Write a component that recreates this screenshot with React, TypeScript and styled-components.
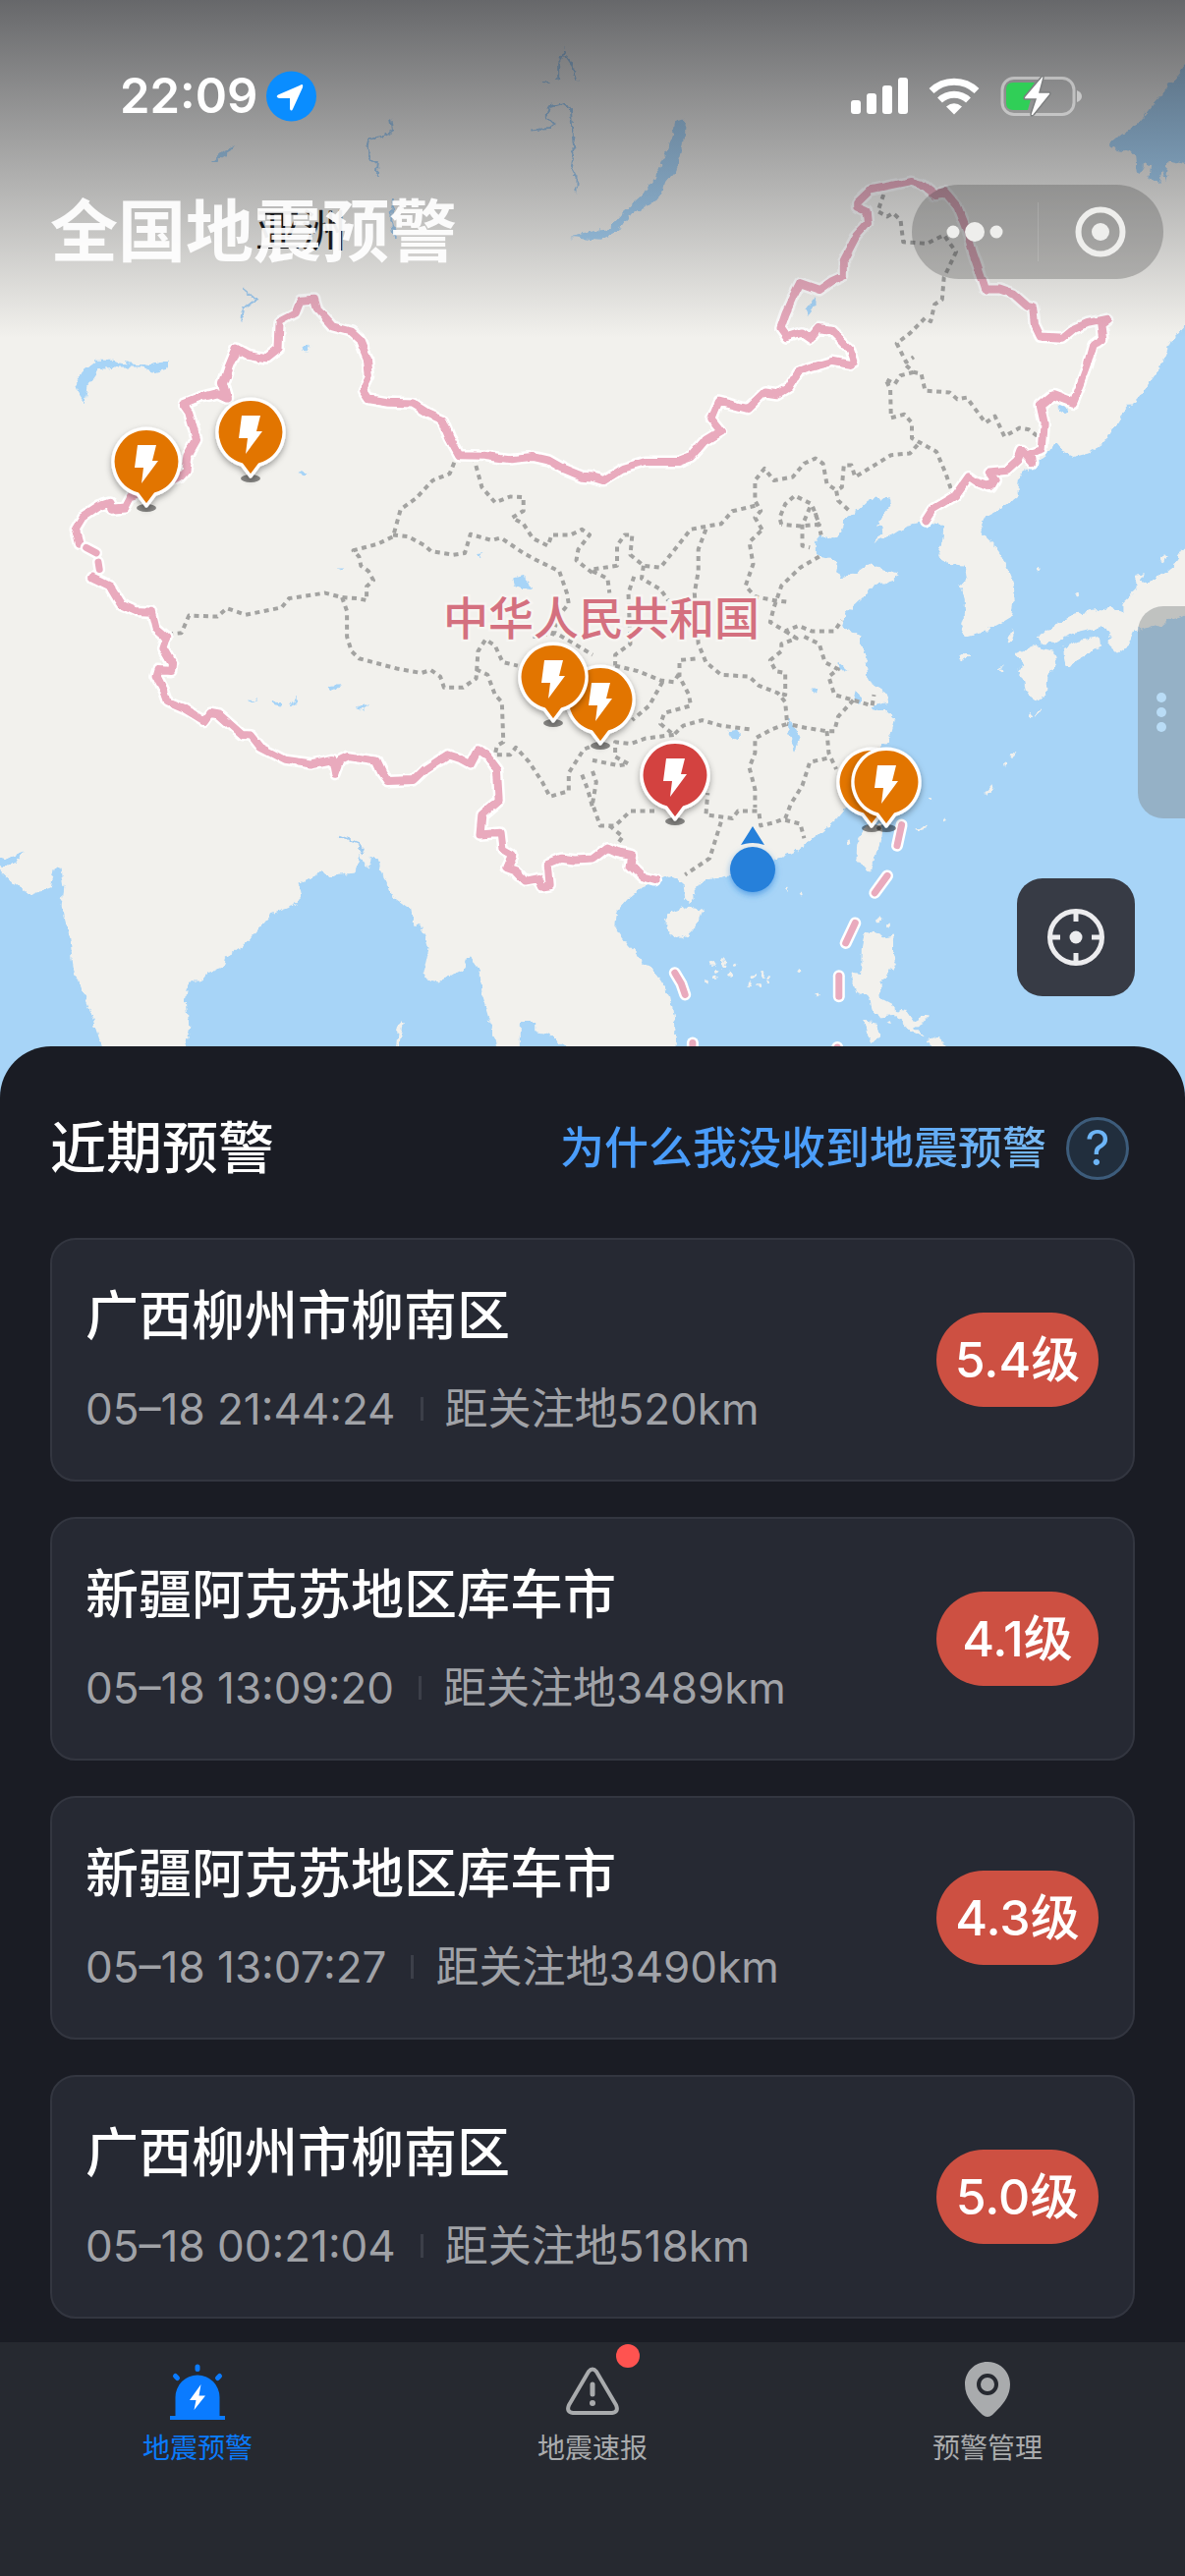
import React from "react";
import styled, { createGlobalStyle } from "styled-components";

const GlobalStyle = createGlobalStyle`
  *, *::before, *::after { box-sizing: border-box; }
  body {
    margin: 0;
    background: #1a1c24;
    color: #fff;
    font-family: Inter, "Noto Sans CJK SC", sans-serif;
  }
  h1, h2, h3, p, ul { margin: 0; padding: 0; }
  ul { list-style: none; }
  button { border: 0; padding: 0; background: none; color: inherit; font: inherit; cursor: pointer; }
  a { color: inherit; text-decoration: none; }
  svg { display: block; }
`;

type Sheet = "a" | "b" | "c" | "d";
type Piece = [Sheet, string];

const sheets: Record<Sheet, { x: number; y: number; kx: number; ky: number }> = {
  a: { x: 0, y: 0, kx: 2.6, ky: 2.904 },
  b: { x: 603, y: 0, kx: 2.6, ky: 2.904 },
  c: { x: 0, y: 500, kx: 2.6, ky: 2.703 },
  d: { x: 603, y: 500, kx: 2.6, ky: 2.703 },
};

const plot = (pieces: Piece[]) =>
  pieces
    .flatMap(([name, text]) => {
      const s = sheets[name];
      return text.split(" ").map((pair) => {
        const [px, py] = pair.split(",").map(Number);
        return `${(s.x + px / s.kx).toFixed(1)},${(s.y + py / s.ky).toFixed(1)}`;
      });
    })
    .join(" ");

const seas: Piece[][] = [
  [
    ["d", "215,1650 222,1480 205,1385 170,1330 130,1290 90,1245 60,1200 65,1155 95,1120 130,1090 170,1075 205,1060 240,1075 245,1120 258,1133 272,1120 268,1085 300,1070 360,1058 440,1020 500,1008 545,985 590,950 640,905 665,875 700,850 740,760 765,700 790,670 800,630 770,600 735,598 745,590 785,580 775,555 730,525 725,470 708,400 660,370 672,335 710,300 735,265 800,245 808,225 770,215 730,200 690,230 665,238 645,225 650,190 620,185 590,170 590,140 605,120 630,130 655,115 665,80 700,55 725,30 750,15 785,20 790,40 760,75 755,100 770,105 745,140 790,120 830,95 870,85 930,95 925,140 910,180 945,200 985,205 990,240 975,260 985,300 985,350 975,385 985,400 1040,385 1085,360 1110,345 1115,310 1112,250 1085,180 1060,145 1025,110 1035,75 1080,50 1125,15"],
    ["b", "1125,1440 1130,1405 1170,1370 1200,1345 1215,1320 1225,1310 1240,1330 1275,1350 1310,1340 1360,1300 1395,1235 1450,1170 1500,1090 1530,1010 1568,965 1620,930"],
    ["d", "1620,1680 215,1680"],
  ],
  [["c", "485,1680 490,1540 500,1470 492,1390 500,1350 530,1350 550,1325 590,1310 595,1285 660,1235 715,1165 780,1140 798,1110 792,1080 840,1055 850,1040 870,1060 940,1050 950,1000 975,1040 980,1005 1000,1010 1015,1060 1035,1110 1090,1150 1095,1190 1115,1195 1135,1260 1118,1340 1160,1350 1200,1325 1230,1310 1240,1275 1270,1320 1275,1380 1295,1450 1315,1530 1325,1680"]],
  [["c", "1375,1600 1375,1460 1415,1460 1415,1490 1450,1495 1495,1527 1550,1600"]],
  [["c", "-20,1020 40,1080 80,1112 135,1090 145,1035 163,1040 170,1090 163,1140 185,1230 195,1320 240,1430 270,1527 290,1680 -20,1680"]],
  [["c", "-10,1000 20,1010 65,993 50,1015 10,1030 -10,1025"]],
  [["b", "1600,165 1568,195 1500,290 1440,370 1400,395 1370,425 1385,445 1435,450 1440,510 1450,515 1460,480 1480,490 1475,530 1500,540 1510,500 1518,535 1525,475 1568,485 1600,480"]],
  [["b", "-20,690 40,680 80,630 130,580 165,530 180,490 210,410 220,355 245,350 240,420 222,500 190,540 180,580 140,610 100,635 70,685 20,708 -60,700"]],
  [["a", "200,1130 215,1100 255,1065 300,1065 340,1075 400,1080 450,1068 440,1088 410,1098 370,1085 300,1085 260,1090 235,1130 225,1190 205,1155"]],
  [["b", "565,915 590,878 592,900 572,932"]],
  [["c", "1357,240 1380,233 1400,250 1408,270 1385,268 1362,258"]],
  [["b", "1228,1208 1240,1196 1256,1210 1242,1220"]],
  [["a", "800,1025 822,1020 815,1038 800,1035"]],
  [["a", "785,1400 795,1388 815,1402 800,1404"]],
  [["c", "942,595 978,587 960,602 944,605"]],
  [["c", "868,535 900,533 890,548 875,545"]],
  [["c", "722,580 748,582 738,592 724,590"]],
  [["c", "770,592 788,562 785,580 775,594"]],
  [["c", "660,572 680,574 668,579"]],
  [["c", "888,212 912,212 902,218"]],
  [["c", "1258,170 1278,168 1268,178"]],
  [["d", "575,545 597,545 590,558 577,552"]],
  [["d", "692,575 700,555 712,565 708,585 695,583"]],
  [["d", "512,625 530,640 550,680 532,718 526,680 516,650"]],
  [["d", "360,660 385,655 388,680 375,688"]],
  [["d", "650,470 672,490 660,495"]],
  [["a", "555,480 585,450 625,430 610,448 575,472"]],
];

const islands: Piece[][] = [
  [["d", "1620,100 1560,160 1530,210 1500,235 1465,255 1450,248 1458,225 1440,228 1435,260 1440,270 1405,305 1405,330 1370,322 1320,330 1275,340 1240,360 1200,385 1180,400 1185,420 1225,418 1260,395 1300,385 1330,378 1360,375 1375,400 1365,420 1390,445 1420,420 1435,385 1480,370 1500,375 1530,350 1568,340 1620,350"]],
  [["d", "1245,430 1290,410 1340,400 1345,425 1310,445 1290,455 1265,485 1250,470"]],
  [["d", "1115,450 1165,425 1220,440 1225,475 1205,510 1200,560 1175,580 1150,560 1140,520 1125,490 1145,480"]],
  [["d", "700,975 725,920 768,915 760,970 745,1010 730,1048 698,1008"]],
  [["d", "190,1180 205,1160 245,1145 293,1150 280,1185 260,1215 232,1232 195,1210"]],
  [["d", "720,1215 745,1212 770,1225 800,1220 795,1260 803,1290 785,1330 760,1350 765,1400 800,1420 800,1440 760,1445 740,1430 735,1395 700,1380 685,1325 710,1330 712,1260"]],
  [["d", "712,1455 755,1465 760,1500 740,1518"]],
  [["d", "780,1420 830,1430 850,1460 885,1440 885,1455 850,1475 880,1505 850,1490 820,1460"]],
  [["d", "885,1508 915,1500 945,1535 900,1535"]],
  [["d", "966,460 985,443 1003,450 985,464"]],
  [["d", "1505,195 1510,170 1520,180 1512,198"]],
  [["d", "1033,835 1058,805 1062,812 1040,838"]],
  [["d", "1105,728 1125,715 1112,738"]],
  [["d", "1172,618 1184,592 1186,602 1178,620"]],
  [["d", "1155,618 1162,610 1168,618 1160,624"]],
  [["d", "1100,410 1110,380 1114,395 1106,416"]],
  [["d", "856,932 885,918 886,928 862,936"]],
  [["d", "926,905 934,898 938,908 930,912"]],
  [["d", "890,848 898,843 900,852"]],
  [["d", "545,1108 552,1100 560,1110 552,1118"]],
  [["d", "672,960 680,955 682,972 674,970"]],
  [["d", "588,1378 596,1374 600,1384 592,1388"]],
  [["d", "776,1465 784,1460 788,1468"]],
  [["d", "512,1092 518,1088 520,1100"]],
  [["c", "1048,1527 1052,1490 1060,1460 1068,1465 1060,1500 1056,1530"]],
];

const reefs = ["318,1300", "330,1322", "345,1290", "350,1305", "362,1332", "375,1302", "322,1335", "350,1298", "415,1355", "425,1335", "440,1362", "452,1330", "466,1335", "462,1350", "304,1350", "547,1322", "760,1180", "780,1195", "1282,288", "1176,217", "1092,750", "1082,490"];

const landBorder: Piece[][] = [
  [
    ["b", "880,1540 900,1505 960,1465 995,1410 1015,1425 1055,1440 1065,1420 1050,1395 1095,1390 1125,1360 1135,1330 1165,1368 1160,1340 1190,1330 1195,1250 1185,1200 1220,1168 1272,1190 1290,1140 1310,1080 1325,1020 1350,1000 1345,960 1365,943 1310,955 1270,975 1245,998 1185,995 1170,960 1165,910 1150,905 1115,870 1075,855 1040,855 1028,815 1005,740 990,680 965,610 935,570 905,575 870,545 845,537 800,547 735,562 700,600 700,612 725,625 728,660 700,695 665,770 665,815 635,830 600,857 550,837 530,880 510,930 498,970 515,997 555,983 578,1000 600,970 630,975 680,1030 692,1070 680,1077 635,1068 580,1085 545,1100 520,1145 490,1165 455,1160 410,1208 365,1195 335,1187 315,1240 340,1275 295,1305 260,1350 225,1365 140,1365 80,1385 30,1420 0,1410"],
    ["a", "1540,1408 1490,1385 1450,1360 1410,1350 1350,1357 1280,1347 1215,1345 1190,1295 1170,1240 1130,1220 1090,1192 1030,1190 975,1180 960,1155 977,1115 972,1060 950,1000 930,980 880,965 840,915 832,885 795,888 782,925 740,950 737,1030 705,1058 655,1048 625,1030 605,1085 590,1135 600,1175 575,1162 530,1175 485,1195 500,1220 520,1300 495,1350 490,1390 475,1410 420,1440"],
    ["c", "345,15 330,45 295,48 290,32 260,42 220,70 200,105 210,145"],
  ],
  [
    ["c", "245,237 290,260 310,295 320,312 360,330 402,332 412,375 440,400 430,430 455,475 453,495 420,492 415,510 435,550 445,580 490,600 540,632 555,610 580,615 640,670 665,672 690,705 755,740 825,750 880,738 887,778 900,740 920,730 995,742 1010,775 1025,797 1095,795 1125,765 1185,725 1215,735 1245,752 1265,712 1290,730 1315,765 1320,850 1275,890 1270,945 1325,940 1330,985 1355,1000 1340,1035 1365,1045 1390,1072 1425,1065 1435,1088 1455,1085 1450,1025 1485,1010 1520,1015"],
    ["d", "0,1012 40,980 65,992 105,1000 100,1030 130,1060 165,1070"],
  ],
];

const dashBorder: Piece[][] = [
  [["c", "228,155 255,170"]],
  [["c", "260,195 263,215"]],
  [["d", "818,918 806,975"]],
  [["d", "780,1058 747,1105"]],
  [["d", "695,1188 670,1243"]],
  [["d", "652,1333 652,1390"]],
  [["d", "218,1325 235,1355 245,1385"]],
  [["d", "265,1518 265,1580"]],
  [["d", "648,1530 648,1580"]],
];

const provinces: Piece[][] = [
  [["c", "445,393 480,390 500,342 575,345 600,322 650,340 745,320 765,295 860,280 905,292 945,295 970,300 970,262 988,245 975,220 955,205 950,180 935,163 1000,145 1040,125 1060,50 1100,20"], ["a", "1145,1420 1190,1400 1210,1345"]],
  [["c", "1040,120 1080,125 1125,150 1140,165 1200,175 1230,170 1245,118 1300,135 1325,128 1385,170 1420,190 1480,220 1500,280 1505,310 1480,340 1460,400"]],
  [["c", "905,292 918,330 918,400 930,440 950,460 1050,488 1115,500 1140,492 1165,510 1175,540 1225,540 1260,515 1265,440 1285,408 1310,425 1330,470 1370,480"]],
  [["c", "1260,490 1290,505 1310,560 1328,580 1332,690 1315,700 1310,725 1350,725 1365,705 1400,745 1435,800 1455,840 1505,825 1505,775 1545,710 1568,700"]],
  [["a", "1253,1350 1275,1440 1310,1485 1350,1468 1385,1470 1385,1510 1355,1530"], ["c", "1385,90 1410,130 1450,150 1460,120 1510,120 1540,105 1560,120 1530,160 1525,190 1568,225"]],
  [["b", "770,575 755,625 780,640 795,630 815,650 822,715 885,720 930,695 962,745 930,820 925,885 905,900 895,950 880,940 840,985 805,1015 830,1070 850,1055"]],
  [["b", "830,1080 850,1100 870,1105 880,1155 945,1160 965,1180 990,1175 1040,1250 1065,1230 1090,1290 1130,1265 1155,1270 1190,1300"]],
  [["b", "850,1100 815,1110 800,1135 775,1120 788,1150 790,1235 825,1225 845,1250 845,1295 910,1335 935,1400 950,1450"]],
  [["b", "860,1315 840,1340 790,1345 695,1410 685,1375 665,1375 660,1440 645,1450 650,1480 685,1515"]],
  [["b", "640,1445 620,1430 610,1370 590,1355 560,1370 530,1410 480,1420 455,1385 430,1420 430,1480 445,1510 430,1530 450,1568"], ["d", "450,105 415,140 425,200 405,260 430,290 480,300 520,305"]],
  [["b", "500,1550 495,1530 510,1490 535,1465 580,1490 600,1550 550,1555 500,1550"]],
  [["b", "575,1500 560,1540"], ["d", "555,90 555,150 575,155"]],
  [["d", "590,60 605,120"]],
  [["d", "430,40 370,55 340,90 310,95 260,105 210,170 180,210 135,205 100,175 105,120 85,120 65,150 65,205 0,215"]],
  [["d", "300,105 280,160 280,220 270,280 280,420 300,470 340,505 415,510 440,535 490,555 510,580 515,640 475,655 430,680 430,720 415,760 430,820 430,870"]],
  [["d", "600,180 550,210 500,260 480,320 470,360 510,385 545,370 580,385 640,385 660,355"]],
  [["d", "510,385 540,405 500,420 500,440 470,465 485,495 510,500 510,560 490,555"]],
  [["d", "560,400 600,420 615,470 650,490 625,510 640,560 690,575 740,590 745,560"]],
  [["d", "690,575 650,620 640,660 620,660 560,650 515,640"]],
  [["d", "620,660 625,720 645,765"]],
  [["d", "620,735 575,745 555,810 525,860 510,900 480,912 445,920 440,880 385,880 370,900 300,890 305,830"]],
  [["d", "510,905 550,915 560,955"]],
  [["d", "340,910 325,960 310,1010 245,1055"]],
  [["d", "415,655 340,645 290,630 240,645 215,670 180,640 190,610 260,590 255,560 230,510 230,465 280,460"]],
  [["d", "60,480 120,495 180,520 215,525 230,500"]],
  [["d", "185,525 150,590 105,630"]],
  [["d", "215,670 140,680 100,695 60,690 60,730 95,750 70,755 0,740"]],
  [["d", "0,770 10,800 0,860 20,920 60,920 100,880 170,880"]],
  [["d", "45,920 80,950 60,980"]],
  [["d", "0,220 40,240 45,280"]],
  [["d", "135,205 130,240 180,270 200,300"]],
  [["d", "110,235 95,280 100,420 60,450 60,480"]],
  [["c", "1410,400 1470,390 1520,420 1568,450"]],
  [["c", "1540,780 1555,820 1568,870"]],
];

const rivers: Piece[][] = [
  [["a", "1035,350 1040,385 1015,402 975,412 972,440 985,470 998,480 995,522"]],
  [["a", "1495,145 1480,190 1480,240"]],
  [["a", "1495,165 1520,205 1530,238"]],
  [["a", "1470,370 1445,340 1450,318 1490,305 1510,320 1515,400 1520,440 1510,490 1525,520 1525,570"]],
  [["a", "1405,385 1450,380 1475,370"]],
  [["a", "1435,240 1455,248"]],
  [["a", "640,855 678,888 645,910 640,948"]],
  [["a", "1040,590 1035,650 1045,700"]],
  [["c", "892,948 950,970 960,1000"]],
];

type Quake = { x: number; y: number; color: string };

const quakes: Quake[] = [
  { x: 149, y: 470, color: "#e27500" },
  { x: 255, y: 440, color: "#e27500" },
  { x: 611, y: 712, color: "#e27500" },
  { x: 563, y: 689, color: "#e27500" },
  { x: 687, y: 789, color: "#d3423f" },
  { x: 887, y: 796, color: "#e27500" },
  { x: 902, y: 796, color: "#e27500" },
];

const QuakePin = ({ x, y, color }: Quake) => (
  <g transform={`translate(${x} ${y})`}>
    <ellipse cx="0" cy="47" rx="10" ry="4" fill="#000" opacity=".45" />
    <path
      d="M0 45 L-9 33 A34 34 0 1 1 9 33 Z"
      fill={color}
      stroke="#fff"
      strokeWidth="3.5"
      strokeLinejoin="round"
      filter="url(#pin-shadow)"
    />
    <path d="M-9 -17 H10 L6 -1 H12 L-5 22 L-3 6 H-12 Z" fill="#fff" />
  </g>
);

const Lines = ({ items }: { items: Piece[][] }) => (
  <>
    {items.map((s, i) => <polyline key={i} points={plot(s)} />)}
  </>
);

const ChinaMap = () => (
  <MapDrawing viewBox="0 0 1206 1120" preserveAspectRatio="xMidYMin slice" role="img" aria-label="地震预警地图">
    <defs>
      <filter id="rough" x="-5%" y="-5%" width="110%" height="110%">
        <feTurbulence type="fractalNoise" baseFrequency=".12" numOctaves="3" seed="4" result="noise" />
        <feDisplacementMap in="SourceGraphic" in2="noise" scale="8" xChannelSelector="R" yChannelSelector="G" />
      </filter>
      <filter id="wobble" x="-5%" y="-5%" width="110%" height="110%">
        <feTurbulence type="fractalNoise" baseFrequency=".07" numOctaves="1" seed="9" result="noise" />
        <feDisplacementMap in="SourceGraphic" in2="noise" scale="7" xChannelSelector="R" yChannelSelector="G" />
      </filter>
      <filter id="pin-shadow" x="-30%" y="-30%" width="160%" height="160%">
        <feDropShadow dx="0" dy="3" stdDeviation="3" floodOpacity=".35" />
      </filter>
      <filter id="blue-shadow" x="-40%" y="-40%" width="180%" height="180%">
        <feDropShadow dx="0" dy="3" stdDeviation="3" floodColor="#2580da" floodOpacity=".6" />
      </filter>
    </defs>
    <rect width="1206" height="1120" fill="#f2f1ed" />
    <g filter="url(#rough)">
      <g fill="#a7d4f7">
        {seas.map((s, i) => <polygon key={i} points={plot(s)} />)}
      </g>
      <g fill="#f2f1ed">
        {islands.map((s, i) => <polygon key={i} points={plot(s)} />)}
        {reefs.map((p) => {
          const [cx, cy] = plot([["d", p]]).split(",");
          return <circle key={p} cx={cx} cy={cy} r="2" />;
        })}
      </g>
    </g>
    <g filter="url(#rough)" fill="none" stroke="#9fcbf0" strokeWidth="2">
      <Lines items={rivers} />
    </g>
    <g fill="none" stroke="#a3a3a1" strokeWidth="4" strokeDasharray="5 4.5" strokeLinejoin="round">
      <Lines items={provinces} />
    </g>
    <g fill="none" strokeLinecap="round" strokeLinejoin="round">
      <g filter="url(#wobble)">
        <g stroke="#fff" strokeWidth="13">
          <Lines items={landBorder} />
        </g>
        <g stroke="#e9aabd" strokeWidth="8">
          <Lines items={landBorder} />
        </g>
      </g>
      <g stroke="#fff" strokeWidth="12">
        <Lines items={dashBorder} />
      </g>
      <g stroke="#e9aabd" strokeWidth="7">
        <Lines items={dashBorder} />
      </g>
    </g>
    <text x="612" y="646" textAnchor="middle" fontSize="46" fontWeight="500" fill="#d4707f" stroke="#f7f5f2" strokeWidth="5" paintOrder="stroke">
      中华人民共和国
    </text>
    {quakes.map((q, i) => <QuakePin key={i} {...q} />)}
    <g fill="#2580da">
      <path d="M766 841 L778 860 Q766 856 754 860 Z" />
      <circle cx="766" cy="885" r="23" filter="url(#blue-shadow)" />
    </g>
  </MapDrawing>
);

/* ---------- layout parts ---------- */

const Page = styled.div`
  display: flex;
  flex-direction: column;
  min-height: 100vh;
`;

const MapArea = styled.section`
  position: relative;
  height: 1120px;
  overflow: hidden;
`;

const MapDrawing = styled.svg`
  width: 100%;
  height: 100%;
`;

const TopOverlay = styled.header`
  position: absolute;
  inset: 0 0 auto;
  height: 344px;
  padding: 66px 22px 0 51px;
  background: linear-gradient(rgba(28, 30, 36, 0.65), rgba(28, 30, 36, 0));
`;

const StatusBar = styled.div`
  display: flex;
  align-items: center;
  justify-content: space-between;
  height: 64px;
  padding: 0 82px 0 71px;
`;

const StatusGroup = styled.div<{ $gap: number }>`
  display: flex;
  align-items: center;
  gap: ${(p) => p.$gap}px;
`;

const Clock = styled.time`
  font-size: 49px;
  line-height: 64px;
  font-weight: 600;
`;

const TitleBar = styled.div`
  display: flex;
  align-items: center;
  justify-content: space-between;
  height: 96px;
  margin-top: 58px;
`;

const PageTitle = styled.h1`
  position: relative;
  font-size: 69px;
  line-height: 96px;
  font-weight: 700;
  color: rgba(255, 255, 255, 0.93);
`;

const ContinentLabel = styled.span`
  position: absolute;
  left: 260px;
  top: 202px;
  font-size: 46px;
  line-height: 64px;
  color: #17181a;
`;

const Capsule = styled.div`
  display: flex;
  width: 256px;
  height: 96px;
  border-radius: 48px;
  background: rgba(60, 60, 60, 0.28);
`;

const CapsuleButton = styled.button`
  display: flex;
  flex: 1;
  align-items: center;
  justify-content: center;
`;

const CapsuleRule = styled.span`
  width: 1px;
  height: 60px;
  margin-top: 18px;
  background: rgba(255, 255, 255, 0.15);
`;

const SideHandle = styled.button`
  position: absolute;
  right: 0;
  top: 617px;
  display: flex;
  flex-direction: column;
  align-items: center;
  justify-content: center;
  gap: 5px;
  width: 48px;
  height: 216px;
  border-radius: 26px 0 0 26px;
  background: rgba(124, 128, 132, 0.42);
`;

const HandleDot = styled.span`
  width: 10px;
  height: 10px;
  border-radius: 50%;
  background: #b9dcf6;
`;

const LocateButton = styled.button`
  position: absolute;
  right: 51px;
  top: 894px;
  display: flex;
  align-items: center;
  justify-content: center;
  width: 120px;
  height: 120px;
  border-radius: 26px;
  background: #373b45;
`;

const Panel = styled.main`
  position: relative;
  flex: 1;
  margin-top: -55px;
  padding: 72px 51px 24px;
  border-radius: 52px 52px 0 0;
  background: #1a1c24;
`;

const PanelHead = styled.div`
  display: flex;
  align-items: center;
  justify-content: space-between;
  height: 64px;
  margin-bottom: 59px;
  padding-right: 6px;
`;

const PanelTitle = styled.h2`
  font-size: 57px;
  line-height: 64px;
  font-weight: 500;
`;

const HelpLink = styled.a`
  display: flex;
  align-items: center;
  gap: 20px;
`;

const HelpText = styled.span`
  font-size: 45px;
  line-height: 64px;
  font-weight: 500;
  color: transparent;
  background: linear-gradient(90deg, #4a9dfb 50%, #78b9f2);
  background-clip: text;
`;

const HelpMark = styled.span`
  display: flex;
  align-items: center;
  justify-content: center;
  width: 64px;
  height: 64px;
  border: 3px solid #3d5c7b;
  border-radius: 50%;
  background: #212e3d;
  color: #6db5f7;
  font-size: 49px;
  line-height: 56px;
  font-weight: 400;
`;

const AlertList = styled.ul`
  display: flex;
  flex-direction: column;
  gap: 36px;
`;

const AlertCard = styled.li`
  display: flex;
  align-items: center;
  justify-content: space-between;
  padding: 44px 35px 44px 34px;
  border: 2px solid #333640;
  border-radius: 26px;
  background: #262933;
`;

const AlertInfo = styled.div`
  display: flex;
  flex-direction: column;
  gap: 34px;
  padding-top: 2px;
`;

const Place = styled.h3`
  font-size: 54px;
  line-height: 64px;
  font-weight: 500;
`;

const Meta = styled.p`
  display: flex;
  align-items: center;
  font-size: 44px;
  line-height: 56px;
  color: #a0a2a7;
`;

const MetaRule = styled.span`
  width: 3px;
  height: 24px;
  margin: 0 22px 0 25px;
  background: #3c3f49;
`;

const Magnitude = styled.strong`
  display: flex;
  align-items: center;
  justify-content: center;
  min-width: 165px;
  height: 96px;
  border-radius: 48px;
  background: #cd5042;
  font-size: 50px;
  line-height: 64px;
  font-weight: 500;
`;

const TabBar = styled.nav`
  display: flex;
  height: 238px;
  padding-top: 16px;
  background: #262930;
`;

const Tab = styled.a<{ $active?: boolean }>`
  display: flex;
  flex: 1;
  flex-direction: column;
  align-items: center;
  gap: 6px;
  font-size: 28px;
  line-height: 40px;
  color: ${(p) => (p.$active ? "#0a7bff" : "#a9abad")};
`;

const TabIcon = styled.span`
  position: relative;
  display: block;
  width: 66px;
  height: 66px;
`;

const UnreadDot = styled.span`
  position: absolute;
  right: -15px;
  top: -14px;
  width: 24px;
  height: 24px;
  border-radius: 50%;
  background: #ff5350;
`;

/* ---------- icons ---------- */

const LocationBadge = () => (
  <svg width="51" height="52" viewBox="0 0 51 52">
    <circle cx="25.5" cy="26" r="25.5" fill="#0a8dff" />
    <path d="M34 15 Q38 12 37 17 L27 39 Q25.500 42 24 39 V28 H13 Q9 26.500 12 24.500 Z" fill="#fff" />
  </svg>
);

const SignalIcon = () => (
  <svg width="58" height="38" viewBox="0 0 58 38" fill="#fff">
    <rect x="0" y="23" width="10" height="14" rx="3" />
    <rect x="16" y="16" width="10" height="21" rx="3" />
    <rect x="32" y="8" width="10" height="29" rx="3" />
    <rect x="48" y="0" width="10" height="37" rx="3" />
  </svg>
);

const WifiIcon = () => (
  <svg width="52" height="38" viewBox="0 0 52 38">
    <g fill="none" stroke="#fff" strokeWidth="7">
      <path d="M3 13.500 A33 33 0 0 1 49 13.500" />
      <path d="M11.500 23 A21 21 0 0 1 40.500 23" />
    </g>
    <path d="M26 37.500 L18 29.500 Q26 23 34 29.500 Z" fill="#fff" />
  </svg>
);

const BatteryIcon = () => (
  <svg width="84" height="42" viewBox="0 0 84 42">
    <rect x="2" y="2.500" width="73" height="37" rx="12" fill="none" stroke="#fff" strokeOpacity=".45" strokeWidth="3" />
    <path d="M13 7 H35 L24 24 H31 L28 35 H13 Q6 35 6 28 V14 Q6 7 13 7 Z" fill="#30cf57" />
    <path d="M78 15 Q83 17 83 21 Q83 25 78 27 Z" fill="#fff" fillOpacity=".5" />
    <path d="M42 1 Q44 -1 44 2 L40 17 H50 Q52 18 50 20 L34 40 Q31 42 31 39 L36 24 H26 Q23 24 25 21 Z" fill="#fff" stroke="#7d7f80" strokeWidth="1.500" />
  </svg>
);

const MoreIcon = () => (
  <svg width="58" height="24" viewBox="0 0 58 24" fill="#eeeeec">
    <circle cx="7" cy="12" r="6.500" />
    <circle cx="29" cy="12" r="10" />
    <circle cx="51" cy="12" r="6.500" />
  </svg>
);

const CloseIcon = () => (
  <svg width="52" height="52" viewBox="0 0 52 52">
    <circle cx="26" cy="26" r="22.500" fill="none" stroke="#eeeeec" strokeWidth="6" />
    <circle cx="26" cy="26" r="9" fill="#eeeeec" />
  </svg>
);

const CrosshairIcon = () => (
  <svg width="60" height="60" viewBox="0 0 60 60" fill="none" stroke="#ececee" strokeWidth="5">
    <circle cx="30" cy="30" r="26.500" />
    <path d="M30 3 V14 M30 46 V57 M3 30 H14 M46 30 H57" />
    <circle cx="30" cy="30" r="6.500" fill="#ececee" stroke="none" />
  </svg>
);

const SirenIcon = () => (
  <svg width="66" height="66" viewBox="0 0 66 66" fill="#0a7bff">
    <path d="M10.500 40 A22.500 22.500 0 0 1 55.500 40 V59 H61 V63 H5 V59 H10.500 Z" />
    <g stroke="#0a7bff" strokeWidth="5" strokeLinecap="round">
      <path d="M33 9 V11.500 M10.500 18.500 L12.500 20.500 M55.500 18.500 L53.500 20.500" />
    </g>
    <path d="M36.500 27 L25 43 H31.500 L29.500 53 L41 38.500 H34.500 Z" fill="#fff" />
  </svg>
);

const WarningIcon = () => (
  <svg width="66" height="66" viewBox="0 0 66 66" fill="none" stroke="#a9abad" strokeWidth="4" strokeLinejoin="round" strokeLinecap="round">
    <path d="M29 14 Q33 9 37 14 L57 48 Q60 55 53 56 H13 Q6 55 9 48 Z" />
    <path d="M33 27 V37" strokeWidth="5" />
    <circle cx="33" cy="46" r="3" fill="#a9abad" stroke="none" />
  </svg>
);

const PlaceIcon = () => (
  <svg width="66" height="66" viewBox="0 0 66 66">
    <path d="M33 4 C46 4 56 14 56 27 C56 41 46 50 38 58 Q33 62 28 58 C20 50 10 41 10 27 C10 14 20 4 33 4 Z" fill="#a9abad" />
    <circle cx="33" cy="27" r="9" fill="#a9abad" stroke="#262930" strokeWidth="4" />
  </svg>
);

/* ---------- data ---------- */

const alerts = [
  { place: "广西柳州市柳南区", time: "05–18 21:44:24", distance: "距关注地520km", level: "5.4级" },
  { place: "新疆阿克苏地区库车市", time: "05–18 13:09:20", distance: "距关注地3489km", level: "4.1级" },
  { place: "新疆阿克苏地区库车市", time: "05–18 13:07:27", distance: "距关注地3490km", level: "4.3级" },
  { place: "广西柳州市柳南区", time: "05–18 00:21:04", distance: "距关注地518km", level: "5.0级" },
];

export default function App() {
  return (
    <Page>
      <GlobalStyle />
      <MapArea>
        <ChinaMap />
        <TopOverlay>
          <ContinentLabel>亚洲</ContinentLabel>
          <StatusBar>
            <StatusGroup $gap={9}>
              <Clock>22:09</Clock>
              <LocationBadge />
            </StatusGroup>
            <StatusGroup $gap={21}>
              <SignalIcon />
              <WifiIcon />
              <BatteryIcon />
            </StatusGroup>
          </StatusBar>
          <TitleBar>
            <PageTitle>全国地震预警</PageTitle>
            <Capsule>
              <CapsuleButton aria-label="更多"><MoreIcon /></CapsuleButton>
              <CapsuleRule />
              <CapsuleButton aria-label="关闭"><CloseIcon /></CapsuleButton>
            </Capsule>
          </TitleBar>
        </TopOverlay>
        <SideHandle aria-label="展开侧栏">
          <HandleDot />
          <HandleDot />
          <HandleDot />
        </SideHandle>
        <LocateButton aria-label="定位"><CrosshairIcon /></LocateButton>
      </MapArea>
      <Panel>
        <PanelHead>
          <PanelTitle>近期预警</PanelTitle>
          <HelpLink href="#help">
            <HelpText>为什么我没收到地震预警</HelpText>
            <HelpMark>?</HelpMark>
          </HelpLink>
        </PanelHead>
        <AlertList>
          {alerts.map((a) => (
            <AlertCard key={a.time}>
              <AlertInfo>
                <Place>{a.place}</Place>
                <Meta>
                  <time>{a.time}</time>
                  <MetaRule />
                  <span>{a.distance}</span>
                </Meta>
              </AlertInfo>
              <Magnitude>{a.level}</Magnitude>
            </AlertCard>
          ))}
        </AlertList>
      </Panel>
      <TabBar>
        <Tab href="#alerts" $active aria-current="page">
          <TabIcon><SirenIcon /></TabIcon>
          地震预警
        </Tab>
        <Tab href="#reports">
          <TabIcon>
            <WarningIcon />
            <UnreadDot />
          </TabIcon>
          地震速报
        </Tab>
        <Tab href="#manage">
          <TabIcon><PlaceIcon /></TabIcon>
          预警管理
        </Tab>
      </TabBar>
    </Page>
  );
}
